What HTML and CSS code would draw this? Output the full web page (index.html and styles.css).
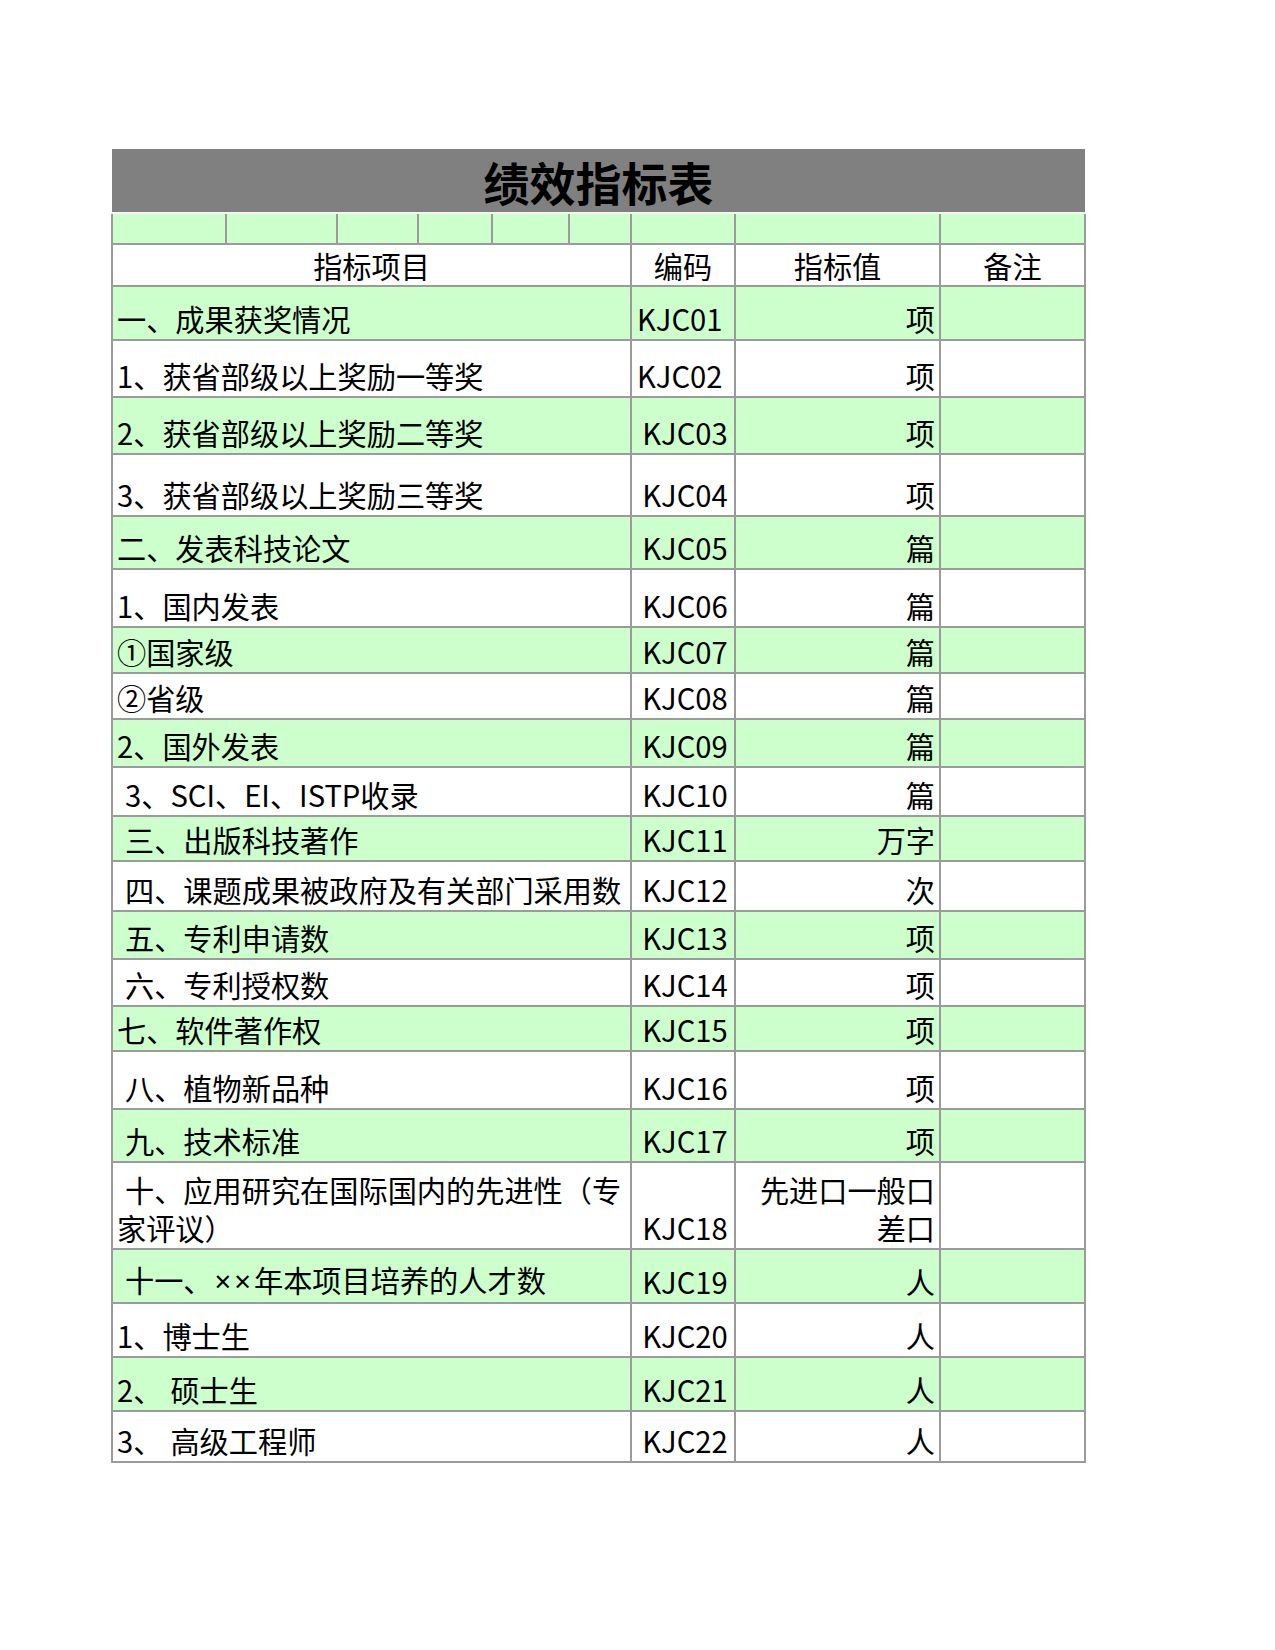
FILE: index.html
```html
<!DOCTYPE html>
<html lang="zh-CN">
<head>
<meta charset="utf-8">
<title>绩效指标表</title>
<link rel="stylesheet" href="styles.css">
</head>
<body>
<table class="sheet">
  <colgroup>
    <col class="c1"><col class="c2"><col class="c3"><col class="c4"><col class="c5"><col class="c6">
    <col class="c7"><col class="c8"><col class="c9">
  </colgroup>
  <tr class="h64"><td class="title" colspan="9">绩效指标表</td></tr>
  <tr class="h31 g"><td></td><td></td><td></td><td></td><td></td><td></td><td></td><td></td><td></td></tr>
  <tr class="h42 head"><td colspan="6">指标项目</td><td>编码</td><td>指标值</td><td>备注</td></tr>
  <tr class="h54 g"><td colspan="6">一、成果获奖情况</td><td class="code l">KJC01</td><td class="val">项</td><td></td></tr>
  <tr class="h57"><td colspan="6">1、获省部级以上奖励一等奖</td><td class="code l">KJC02</td><td class="val">项</td><td></td></tr>
  <tr class="h57 g"><td colspan="6">2、获省部级以上奖励二等奖</td><td class="code">KJC03</td><td class="val">项</td><td></td></tr>
  <tr class="h62"><td colspan="6">3、获省部级以上奖励三等奖</td><td class="code">KJC04</td><td class="val">项</td><td></td></tr>
  <tr class="h53 g"><td colspan="6">二、发表科技论文</td><td class="code">KJC05</td><td class="val">篇</td><td></td></tr>
  <tr class="h58"><td colspan="6">1、国内发表</td><td class="code">KJC06</td><td class="val">篇</td><td></td></tr>
  <tr class="h46 g"><td colspan="6">①国家级</td><td class="code">KJC07</td><td class="val">篇</td><td></td></tr>
  <tr class="h46"><td colspan="6">②省级</td><td class="code">KJC08</td><td class="val">篇</td><td></td></tr>
  <tr class="h48 g"><td colspan="6">2、国外发表</td><td class="code">KJC09</td><td class="val">篇</td><td></td></tr>
  <tr class="h49"><td colspan="6" class="ind">3、SCI、EI、ISTP收录</td><td class="code">KJC10</td><td class="val">篇</td><td></td></tr>
  <tr class="h45 g"><td colspan="6" class="ind">三、出版科技著作</td><td class="code">KJC11</td><td class="val">万字</td><td></td></tr>
  <tr class="h50"><td colspan="6" class="ind">四、课题成果被政府及有关部门采用数</td><td class="code">KJC12</td><td class="val">次</td><td></td></tr>
  <tr class="h48 g"><td colspan="6" class="ind">五、专利申请数</td><td class="code">KJC13</td><td class="val">项</td><td></td></tr>
  <tr class="h47"><td colspan="6" class="ind">六、专利授权数</td><td class="code">KJC14</td><td class="val">项</td><td></td></tr>
  <tr class="h45 g"><td colspan="6">七、软件著作权</td><td class="code">KJC15</td><td class="val">项</td><td></td></tr>
  <tr class="h58"><td colspan="6" class="ind">八、植物新品种</td><td class="code">KJC16</td><td class="val">项</td><td></td></tr>
  <tr class="h53 g"><td colspan="6" class="ind">九、技术标准</td><td class="code">KJC17</td><td class="val">项</td><td></td></tr>
  <tr class="h87 two"><td colspan="6"><span class="ind1">十、应用研究在国际国内的先进性（专</span><br>家评议）</td><td class="code">KJC18</td><td class="val">先进口一般口<br>差口</td><td></td></tr>
  <tr class="h54 g"><td colspan="6" class="ind">十一、<span class="latin">××</span>年本项目培养的人才数</td><td class="code">KJC19</td><td class="val">人</td><td></td></tr>
  <tr class="h54"><td colspan="6">1、博士生</td><td class="code">KJC20</td><td class="val">人</td><td></td></tr>
  <tr class="h54 g"><td colspan="6">2、<span class="gap">硕士生</span></td><td class="code">KJC21</td><td class="val">人</td><td></td></tr>
  <tr class="h51"><td colspan="6">3、<span class="gap">高级工程师</span></td><td class="code">KJC22</td><td class="val">人</td><td></td></tr>
</table>
</body>
</html>
```
FILE: styles.css
```css
html, body {
  margin: 0;
  padding: 0;
  background: #ffffff;
}

body {
  font-family: "Noto Sans CJK SC", "Noto Sans", sans-serif;
  color: #000000;
}

.sheet {
  margin: 149px 0 0 111px;
  border-collapse: collapse;
  table-layout: fixed;
  width: 973px;
}

.c1 { width: 114px; }
.c2 { width: 111px; }
.c3 { width: 81px; }
.c4 { width: 74px; }
.c5 { width: 77px; }
.c6 { width: 62px; }
.c7 { width: 104px; }
.c8 { width: 205px; }
.c9 { width: 145px; }

.sheet td {
  border: 2px solid #9b9b9b;
  padding: 0 4px 2px 4px;
  font-size: 29.2px;
  line-height: 37px;
  vertical-align: bottom;
  white-space: nowrap;
  overflow: hidden;
}

.sheet td.title {
  background: #808080;
  border: none;
  border-bottom: 2px solid #f4f4f4;
  font-size: 46px;
  font-weight: bold;
  text-align: center;
  vertical-align: middle;
  line-height: 54px;
  padding: 0;
}

.g td {
  background: #ccffcc;
}

.head td {
  text-align: center;
  vertical-align: middle;
  padding: 0 4px;
}

.two td {
  line-height: 38px;
}

.sheet td.code {
  text-align: center;
  padding-left: 4px;
  padding-right: 0;
}

.sheet td.code.l {
  text-align: left;
  padding-left: 5px;
}

.sheet td.val {
  text-align: right;
  padding-right: 4px;
}

.sheet td.ind {
  padding-left: 12px;
}

.ind1 {
  padding-left: 8px;
}

.gap {
  padding-left: 8px;
}

.latin {
  font-family: "Noto Sans", sans-serif;
  letter-spacing: 3px;
  padding-left: 2px;
}

.h31 { height: 31px; }
.h42 { height: 42px; }
.h45 { height: 45px; }
.h46 { height: 46px; }
.h47 { height: 47px; }
.h48 { height: 48px; }
.h49 { height: 49px; }
.h50 { height: 50px; }
.h51 { height: 51px; }
.h53 { height: 53px; }
.h54 { height: 54px; }
.h57 { height: 57px; }
.h58 { height: 58px; }
.h62 { height: 62px; }
.h64 { height: 64px; }
.h87 { height: 87px; }
```
